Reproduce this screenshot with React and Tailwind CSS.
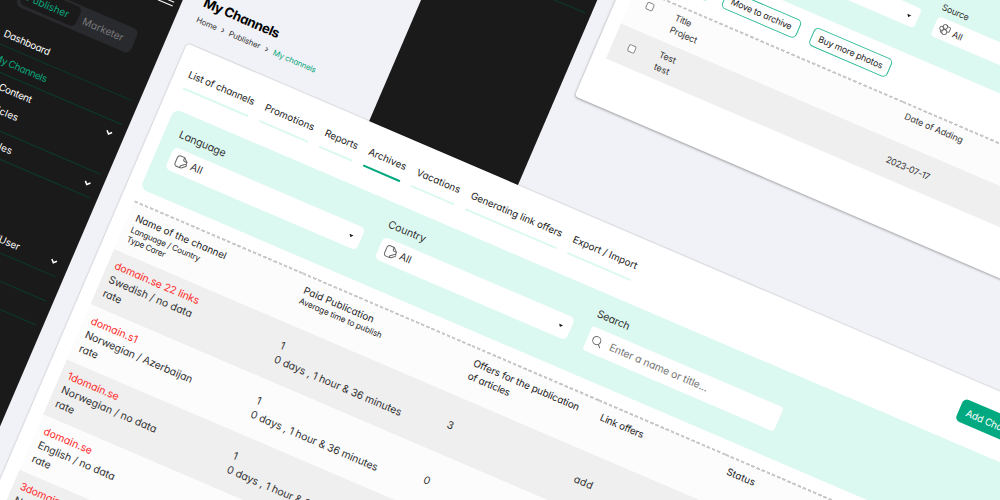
import React, { useLayoutEffect, useRef } from "react";

const DASH =
  "bg-[repeating-linear-gradient(90deg,#c6c6c6_0_3.5px,transparent_3.5px_5.6px)]";

/* Single-line text whose tracking is adjusted so that it spans `w` pixels. */
function T({ w, className = "", children }) {
  const ref = useRef(null);
  useLayoutEffect(() => {
    const el = ref.current;
    el.style.letterSpacing = "0px";
    const gap = (w - el.offsetWidth) / String(children).length;
    el.style.letterSpacing = `${gap}px`;
  }, [w, children]);
  return (
    <span className={`block whitespace-pre ${className}`}>
      <span ref={ref} className="inline-block align-top">{children}</span>
    </span>
  );
}

function Caret() {
  return (
    <svg viewBox="0 0 6 4" className="mt-[2px] h-[3px] w-[5px] shrink-0">
      <path d="M0 0h6L3 4z" fill="#222" />
    </svg>
  );
}

function Chevron() {
  return (
    <svg viewBox="0 0 10 8" className="h-[6px] w-[7px]" fill="none" stroke="#fff" strokeWidth="2.2">
      <path d="M1 2l4 4 4-4" />
    </svg>
  );
}

function DocIcon() {
  return (
    <svg viewBox="0 0 24 24" className="h-[13.500px] w-[13.500px] shrink-0" fill="none" stroke="#666" strokeWidth="1.8" strokeLinecap="round" strokeLinejoin="round">
      <path d="M11 22H6.500a4.500 4.500 0 0 1-4.500-4.500v-11A4.500 4.500 0 0 1 6.500 2H14l7 6.500V12" />
      <path d="M14 2v4a2.500 2.500 0 0 0 2.500 2.500H21" />
      <path d="M12 22l.8-3.600 6.400-5.200a1.900 1.900 0 0 1 2.800 2.700l-6.500 5.300z" />
    </svg>
  );
}

function RingsIcon() {
  return (
    <svg viewBox="0 0 24 24" className="h-[12px] w-[12px] shrink-0" fill="none" stroke="#666" strokeWidth="1.8">
      <circle cx="11" cy="6.500" r="4.500" />
      <circle cx="5.500" cy="12" r="4" />
      <circle cx="13" cy="17" r="5" />
      <path d="M14.500 4.500h5.500a2 2 0 0 1 2 2v5a3 3 0 0 1-3 3h-1.500M4.500 16c0 3 2 4.500 4.500 4M13 11l1 1" />
    </svg>
  );
}

function SearchIcon() {
  return (
    <svg viewBox="0 0 24 24" className="h-[13px] w-[13px] shrink-0" fill="none" stroke="#6a6a6a" strokeWidth="1.8" strokeLinecap="round">
      <circle cx="10.500" cy="11" r="7.500" />
      <path d="M16 16.500l4.500 4.500" />
    </svg>
  );
}

function NavRow({ h, line, chevron, pl = "pl-[17px]", children }) {
  return (
    <div className={`flex shrink-0 flex-col ${h}`}>
      <div className={`flex flex-1 items-center justify-between pr-[12.500px] ${pl}`}>
        {children || <span />}
        {chevron && <Chevron />}
      </div>
      {line && <div className="mr-[7px] h-px bg-[#0a3b2e]" />}
    </div>
  );
}

function SidebarA() {
  return (
    <aside className="flex h-full w-[168px] shrink-0 flex-col bg-[#1a1a1a] text-[9.900px] leading-[14px] text-white">
      <div className="mt-[349px] ml-[145px] flex w-[16px] flex-col gap-[2.800px]">
        <div className="h-[1.300px] bg-white" />
        <div className="h-[1.300px] bg-white" />
        <div className="h-[1.300px] bg-white" />
      </div>
      <div className="mt-[34.500px] ml-[16px] flex h-[26px] w-[124px] shrink-0 rounded-[6px] bg-[#292a2d] p-[2.500px] text-[10.200px]">
        <div className="flex w-[60px] items-center rounded-[5px] bg-[#1a1a1a] pl-[5.500px] text-[#0ba67c]">
          <T w={45}>Publisher</T>
        </div>
        <div className="flex items-center pl-[6px] text-[#77777a]">
          <T w={44}>Marketer</T>
        </div>
      </div>
      <div className="h-[16px] shrink-0" />
      <NavRow h="h-[26.500px]" line>
        <T w={49.500}>Dashboard</T>
      </NavRow>
      <NavRow h="h-[26px]" line>
        <T w={56.500} className="text-[#0ba67c]">My Channels</T>
      </NavRow>
      <NavRow h="h-[23px]" chevron>
        <T w={51}>My Content</T>
      </NavRow>
      <NavRow h="h-[31px]" line pl="pl-[26.500px] pb-[8px]">
        <T w={36.500}>Articles</T>
      </NavRow>
      <NavRow h="h-[26px]" line chevron>
        <T w={54}>My Articles</T>
      </NavRow>
      <div className="h-[59px] shrink-0" />
      <NavRow h="h-[27px]" line chevron pl="pl-[51.500px]">
        <T w={64}>technicalUser</T>
      </NavRow>
      <NavRow h="h-[26px]" line />
      <NavRow h="h-[26px]" line />
    </aside>
  );
}

function Field({ label, w, children }) {
  return (
    <div className="flex w-[208px] flex-col gap-[4.500px]">
      <T w={w} className="ml-[-0.500px] text-[10.600px] leading-[16px] text-[#333]">{label}</T>
      {children}
    </div>
  );
}

function Select() {
  return (
    <div className="flex h-[24px] items-center rounded-[5px] bg-white pr-[8px] pl-[6px]">
      <DocIcon />
      <T w={12} className="ml-[3px] flex-1 text-[10.300px] text-[#333]">All</T>
      <Caret />
    </div>
  );
}

const TABS = [
  ["List of channels", 71.500],
  ["Promotions", 53.500],
  ["Reports", 35.400],
  ["Archives", 40],
  ["Vacations", 46.400],
  ["Generating link offers", 99],
  ["Export / Import", 69],
];

const ROWS = [
  [["domain.se 22 links", 91], ["Swedish / no data", 90], "3"],
  [["domain.s1", 50], ["Norwegian / Azerbaijan", 116], "0"],
  [["1domain.se", 55], ["Norwegian / no data", 102.500], "0"],
  [["domain.se", 52], ["English / no data", 83.500], "0"],
  [["3domain.se", 57], ["Norwegian / no data", 102.500], "0"],
];

const COLS = "grid grid-cols-[183px_184.500px_138px_137.500px_317px]";

function HeadCell({ children }) {
  return (
    <div>
      <div className={`h-[2px] ${DASH}`} />
      <div className="pt-[6.500px] pl-[8px]">{children}</div>
    </div>
  );
}

function ChannelTable() {
  return (
    <div className="mt-[12.400px] w-[960px] text-[#333]">
      <div className={`${COLS} h-[53.200px] bg-[#fcfcfc] text-[9.900px] leading-[14px] text-[#222]`}>
        <HeadCell>
          <T w={98}>Name of the channel</T>
          <T w={75} className="mt-[0.500px] text-[8.200px] leading-[10.500px]">Language / Country</T>
          <T w={41} className="text-[8.200px] leading-[10.500px]">Type Carer</T>
        </HeadCell>
        <HeadCell>
          <T w={76}>Paid Publication</T>
          <T w={89} className="text-[8.200px] leading-[10.500px]">Average time to publish</T>
        </HeadCell>
        <HeadCell>
          <T w={114.500}>Offers for the publication</T>
          <T w={45}>of articles</T>
        </HeadCell>
        <HeadCell>
          <T w={46}>Link offers</T>
        </HeadCell>
        <HeadCell>
          <T w={30.500}>Status</T>
        </HeadCell>
      </div>
      {ROWS.map(([name, lang, offers], i) => (
        <div
          key={i}
          className={`${COLS} h-[60px] items-center text-[10.500px] leading-[15px] ${i % 2 ? "bg-[#fcfcfc]" : "bg-[#efefef]"}`}
        >
          <div className="pl-[7.500px]">
            <T w={name[1]} className="text-[#ff2b2b]">{name[0]}</T>
            <T w={lang[1]}>{lang[0]}</T>
            <T w={20}>rate</T>
          </div>
          <div className="pl-[8px]">
            <T w={3.500}>1</T>
            <T w={137}>{"0 days , 1 hour & 36 minutes"}</T>
          </div>
          <div className="pl-[8px]">{offers}</div>
          <div className="pl-[8px]">
            <T w={20}>add</T>
          </div>
          <div />
        </div>
      ))}
    </div>
  );
}

function ChannelsWindow() {
  return (
    <section className="absolute top-0 left-0 flex h-full">
      <SidebarA />
      <main className="flex flex-col pt-[331.200px] pl-[20.500px]">
        <T w={81.500} className="text-[13.300px] leading-[20px] font-bold text-black">My Channels</T>
        <div className="mt-[2.500px] flex h-[12px] items-center text-[7.900px] leading-[12px] text-[#333]">
          <T w={21.500}>Home</T>
          <span className="w-[13.500px] text-center text-[9px] leading-[10px]">›</span>
          <T w={34}>Publisher</T>
          <span className="w-[14.500px] text-center text-[9px] leading-[10px]">›</span>
          <T w={46} className="text-[#0ba67c]">My channels</T>
        </div>
        <div className="mt-[20.300px] flex h-[600px] w-[1000px] flex-col rounded-[4px] bg-white pl-[14.300px] shadow-[0_0_2px_rgba(0,0,0,0.3)]">
          <div className="flex items-start pt-[20px]">
            <nav className="flex w-[488px] gap-[12.200px] pt-px text-[9.800px] leading-[14px] text-[#222]">
              {TABS.map(([label, w]) => (
                <div key={label} className="flex flex-col gap-[7px]">
                  <T w={w}>{label}</T>
                  <div className={`h-[2.500px] ${label === "Archives" ? "bg-[#00a97f]" : "bg-[#dcf9f1]"}`} />
                </div>
              ))}
            </nav>
            <div className="ml-[352px] flex h-[24.500px] w-[80px] items-center rounded-[5px] bg-[#00a97f] pl-[8px] text-[9.900px] text-white">
              <T w={58}>Add Channel</T>
            </div>
          </div>
          <div className="mt-[20.500px] flex h-[87.400px] w-[960px] shrink-0 gap-[19.300px] rounded-[7px] bg-[#dcf9f1] pt-[14.500px] pl-[15.700px]">
            <Field label="Language" w={50}><Select /></Field>
            <Field label="Country" w={40}><Select /></Field>
            <Field label="Search" w={35}>
              <div className="flex h-[26px] items-center rounded-[3px] bg-white pl-[4px] text-[10.400px] text-[#757575]">
                <SearchIcon />
                <T w={106} className="ml-[7px]">Enter a name or title...</T>
              </div>
            </Field>
          </div>
          <ChannelTable />
        </div>
      </main>
    </section>
  );
}

function OutlineButton({ w, children }) {
  return (
    <div className="flex h-[20px] shrink-0 items-center rounded-[5px] border border-[#2dbb97] px-[7px] text-[#222]">
      <T w={w}>{children}</T>
    </div>
  );
}

function Checkbox() {
  return <div className="h-[8px] w-[8px] rounded-[2px] border border-[#888] bg-white" />;
}

const PCOLS = "grid grid-cols-[40.500px_250px_300px]";

function PhotosWindow() {
  return (
    <section className="absolute top-0 left-[387px] flex h-full">
      <aside className="h-full w-[161.700px] bg-[#1a1a1a] pt-[201px] pr-[6px]">
        <div className="h-px bg-[#0a3b2e]" />
      </aside>
      <main className="pl-[17.300px]">
        <div className="h-[281.600px] w-[700px] rounded-b-[4px] bg-white pl-[14px] text-[8.900px] leading-[13px] text-[#333] shadow-[0_1px_2.500px_rgba(0,0,0,0.35)]">
          <div className="flex h-[111.500px] w-[660px] gap-[18px] bg-[#dcf9f1] pt-[48px] pl-[89.500px]">
            <div className="flex w-[181.500px] flex-col pt-[16.500px]">
              <div className="flex h-[21px] items-center justify-end rounded-[4px] bg-white pr-[7px]"><Caret /></div>
            </div>
            <div className="flex w-[182px] flex-col gap-[3.500px]">
              <T w={28.500}>Source</T>
              <div className="flex h-[21px] items-center rounded-[4px] bg-white pl-[5.500px]">
                <RingsIcon />
                <T w={10} className="ml-[2.500px]">All</T>
              </div>
            </div>
          </div>
          <div className="mt-[11px] ml-[-0.500px] flex gap-[13.700px]">
            <div className="h-[20px] w-[71.500px] rounded-[5px] border border-[#2dbb97]" />
            <OutlineButton w={65}>Move to archive</OutlineButton>
            <OutlineButton w={69}>Buy more photos</OutlineButton>
          </div>
          <div className="mt-[14.400px] h-[40px] w-[590px] bg-[#fcfcfc]">
            <div className={`${PCOLS} h-[2px]`}>
              <div className={DASH} />
              <div className={DASH} />
              <div className={DASH} />
            </div>
            <div className={`${PCOLS} pt-[4.200px]`}>
              <div className="pt-[2.500px] pl-[16.500px]"><Checkbox /></div>
              <div className="pl-[7px]">
                <T w={17}>Title</T>
                <T w={28.500}>Project</T>
              </div>
              <div className="pl-[7px]"><T w={62.500}>Date of Adding</T></div>
            </div>
          </div>
          <div className={`${PCOLS} h-[38.500px] w-[590px] items-center bg-[#efefef]`}>
            <div className="pl-[16.500px]"><Checkbox /></div>
            <div className="pl-[7px]">
              <T w={17.500}>Test</T>
              <T w={16.500}>test</T>
            </div>
            <div className="pl-[7px]"><T w={46.500}>2023-07-17</T></div>
          </div>
        </div>
      </main>
    </section>
  );
}

export default function App() {
  return (
    <div className="relative h-[500px] w-[1000px] overflow-hidden bg-[#f1f2f7] font-['Inter','Open_Sans',sans-serif] [font-feature-settings:'cv11'_1,'calt'_0]">
      <div className="absolute top-[-420px] left-0 h-[920px] w-[1300px] origin-[0px_420px] rotate-[23.200deg]">
        <PhotosWindow />
        <ChannelsWindow />
      </div>
    </div>
  );
}
